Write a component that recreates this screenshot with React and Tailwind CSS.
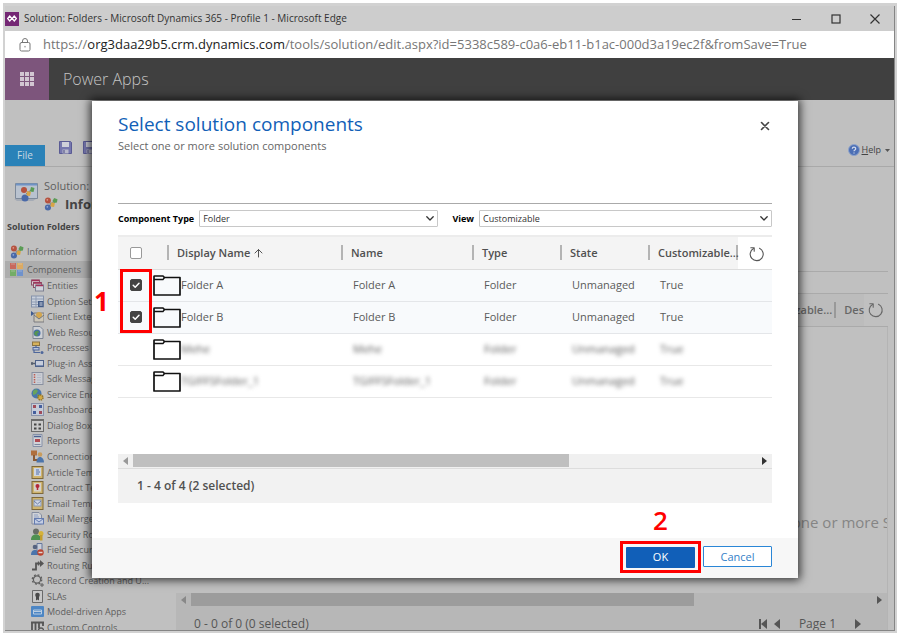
import React from "react";

const ink = { fill: "none", strokeLinecap: "round", strokeLinejoin: "round" };

function Spheres({ className }) {
  return (
    <svg viewBox="0 0 16 16" className={className} aria-hidden="true">
      <path d="M4 4l4 4 5-5M8 8l-4 4" stroke="#8a8f96" strokeWidth="1.5" fill="none" />
      <circle cx="4.5" cy="4" r="3.4" fill="#b5523f" />
      <circle cx="3.8" cy="3.2" r="1" fill="#dd9a8c" />
      <circle cx="4.5" cy="12" r="3.5" fill="#4a69a8" />
      <circle cx="3.8" cy="11.2" r="1" fill="#93a9d6" />
      <path d="M11.6 1l3.8 1.6-.6 3.8-3.8.4-1-2.8z" fill="#5a9c55" />
      <path d="M8.5 6l4 1-1 4.500-4.300-.6z" fill="#d8a545" />
    </svg>
  );
}

function ComponentsIcon() {
  return (
    <svg viewBox="0 0 14 14" className="size-[14px] shrink-0" aria-hidden="true">
      <rect x="0" y="0" width="6" height="6" fill="#c8685c" />
      <rect x="7" y="0" width="6" height="6" fill="#dcaa62" />
      <rect x="0" y="7" width="6" height="6" fill="#74ad66" />
      <rect x="7" y="7" width="6" height="6" fill="#6f92cc" />
      <path d="M1 1h4M8 1h4M1 8h4M8 8h4" stroke="#ddd" strokeOpacity=".4" />
    </svg>
  );
}

const glyphs = {
  entities: (
    <>
      <rect x=".5" y="1" width="8" height="5" fill="#d8cdd3" stroke="#8d4f68" />
      <rect x="2.5" y="3.5" width="8" height="5" fill="#d8cdd3" stroke="#8d4f68" />
      <rect x="4.5" y="6" width="8" height="6" fill="#cfd3dc" stroke="#7c7f90" />
      <path d="M1 1.5h7M3 4h7M5 6.5h7" stroke="#a03058" strokeWidth="1.3" />
    </>
  ),
  options: (
    <>
      <rect x=".5" y="1" width="12" height="11" fill="#c9d0dc" stroke="#8592aa" />
      <path d="M1 4h11M1 7h7M1 9.500h7M5 1v11" stroke="#8f9cb3" />
      <rect x="7" y="6" width="5.500" height="6" fill="#425a86" />
      <path d="M8.500 8h3M8.500 10h3" stroke="#d0d5df" />
    </>
  ),
  client: (
    <>
      <path d="M0 1l3.500 2.500L0 6z" fill="#3f5c92" />
      <path d="M3 3h10v9H3z" fill="#ccc7b9" stroke="#7a7a80" />
      <circle cx="8" cy="5" r="3" fill="#d3a64f" />
      <path d="M3 5l5 4 5-4" stroke="#71747c" fill="none" />
    </>
  ),
  web: (
    <>
      <path d="M2 .5h7l3 3v9H2z" fill="#ced1d6" stroke="#7c8594" />
      <circle cx="6" cy="7" r="3.500" fill="#466fa8" />
      <path d="M4 5.500l3-1 1 2-2 1 1 2-2 .5-2-2z" fill="#569451" />
    </>
  ),
  process: (
    <>
      <rect x="1.500" y="1" width="7" height="3.500" fill="#d6b25c" stroke="#8b7340" />
      <path d="M5 4.500v3M3 9v2.500h6" stroke="#4e679b" fill="none" strokeWidth="1.200" />
      <rect x="2" y="6.500" width="6" height="2.500" fill="#b8c4db" stroke="#4e679b" />
      <circle cx="11" cy="11.500" r="1.500" fill="#4e679b" />
    </>
  ),
  plugin: (
    <>
      <path d="M0 6.500h4M1 5v3" stroke="#57606f" strokeWidth="1.500" />
      <rect x="4.500" y="3.500" width="8" height="6" fill="#c6cddb" stroke="#4d6189" />
      <path d="M5 8.500h7" stroke="#7b8eb4" />
    </>
  ),
  sdk: (
    <>
      <rect x="1" y=".5" width="11" height="12" fill="#cbcdd3" stroke="#8990a0" />
      <path d="M3.500 2v9" stroke="#bb5b50" strokeWidth="1.500" strokeDasharray="1.500 1" />
      <path d="M6 3h4M6 5.500h4M6 8h4M6 10.500h4" stroke="#b3bac9" />
    </>
  ),
  service: (
    <>
      <circle cx="5.500" cy="5.500" r="5" fill="#4876aa" />
      <path d="M2 3l3-2 2 2-2 3-3 1zM6 6l3 1-2 3z" fill="#67a35c" />
      <circle cx="9.500" cy="9.500" r="2.500" fill="#d1aa46" stroke="#907128" strokeDasharray="1.400 .8" strokeWidth="1.500" />
    </>
  ),
  dash: (
    <>
      <rect x=".5" y=".5" width="12" height="12" fill="#c5cbd9" stroke="#8b94ab" />
      <rect x="2" y="2" width="3" height="3" fill="#9f4c5a" />
      <rect x="8" y="2" width="3" height="3" fill="#455f9d" />
      <rect x="2" y="8" width="3" height="3" fill="#455f9d" />
      <rect x="8" y="8" width="3" height="3" fill="#9f4c5a" />
    </>
  ),
  dialog: (
    <>
      <rect x=".5" y=".5" width="12" height="12" fill="#cacaca" stroke="#6c6c6c" />
      <path d="M1 1.500h11" stroke="#6c6c6c" />
      <path d="M3 4.500h2.500v2H3zM7.500 4.500H10v2H7.500zM3 8.500h2.500v2H3zM7.500 8.500H10v2H7.500z" fill="#454545" />
    </>
  ),
  reports: (
    <>
      <path d="M2 .5h9v12H2z" fill="#d1d3d8" stroke="#8590a8" />
      <path d="M3 2.500h7" stroke="#4b6190" strokeWidth="1.500" />
      <path d="M4 5h5v3H4z" fill="#b04b52" />
      <path d="M3.500 10.500h6" stroke="#7c88a0" />
    </>
  ),
  connection: (
    <>
      <path d="M0 .5h6v5H0z" fill="#b06f3c" />
      <path d="M3 5v5h4" stroke="#8b5a34" fill="none" strokeWidth="2" />
      <circle cx="9" cy="4.500" r="2.300" fill="#c99c5c" />
      <path d="M5.500 12.500c0-4 2-5.500 3.500-5.500s4 1.500 4 5.500z" fill="#4c75ab" />
    </>
  ),
  article: (
    <>
      <rect x="1" y=".5" width="11" height="12" fill="#cfb46e" stroke="#7d683a" />
      <rect x="3" y="2" width="7" height="8" fill="#cdd5e4" />
      <path d="M5 4h3M5 6h4M5 8h3" stroke="#5370a8" />
    </>
  ),
  contract: (
    <>
      <rect x="1" y=".5" width="11" height="12" fill="#cfb46e" stroke="#7d683a" />
      <rect x="3" y="2" width="7" height="8.500" fill="#d6d1c9" />
      <circle cx="6.500" cy="5" r="2" fill="#b32839" />
      <path d="M6.500 6v3" stroke="#b32839" strokeWidth="1.500" />
    </>
  ),
  email: (
    <>
      <rect x="1" y=".5" width="11" height="12" fill="#cfb46e" stroke="#7d683a" />
      <rect x="3" y="3" width="7" height="6" fill="#cdd5e4" stroke="#8797b8" />
      <path d="M3 4l3.500 3L10 4" stroke="#6c7fa8" fill="none" />
    </>
  ),
  mail: (
    <>
      <path d="M1 .5h7l2.500 2.500v9H1z" fill="#d0d2d7" stroke="#858da0" />
      <path d="M3 3h4M3 5h5" stroke="#8fa0c5" />
      <rect x="3.500" y="6.500" width="9" height="5.500" fill="#c3cde3" stroke="#637bb0" />
      <path d="M3.500 6.500L8 10l4.500-3.500" stroke="#637bb0" fill="none" />
    </>
  ),
  security: (
    <>
      <circle cx="5" cy="3.500" r="3" fill="#686c66" />
      <path d="M0 12c0-4 2-5.500 5-5.500s5 1.500 5 5.500z" fill="#4f9150" />
      <circle cx="10" cy="5.500" r="2.500" fill="#d4b23b" />
      <path d="M9 7v5.500h2.500V7z" fill="#c39d2c" />
    </>
  ),
  field: (
    <>
      <path d="M6 .5h5v8H6z" fill="#c9ced8" stroke="#65779c" />
      <circle cx="4" cy="4" r="2.300" fill="#55637f" />
      <path d="M0 12c0-4 2-5 4-5s4 1 4 5z" fill="#4a75ac" />
      <circle cx="9.500" cy="9.500" r="3.200" fill="#b9432f" />
      <path d="M7.500 9.500h4" stroke="#e0d5d2" strokeWidth="1.500" />
    </>
  ),
  routing: (
    <>
      <path d="M1 10.500h4v-6h5" stroke="#555" strokeWidth="1.800" fill="none" />
      <path d="M9 1l4 3.500L9 8z" fill="#555" />
      <path d="M7.500 2.500v4" stroke="#555" strokeWidth="1.300" />
    </>
  ),
  record: (
    <>
      <circle cx="6" cy="5.500" r="4.700" stroke="#5e5e5e" strokeWidth="1.400" strokeDasharray="1.900 1.800" fill="none" />
      <circle cx="6" cy="5.500" r="3.600" stroke="#5e5e5e" strokeWidth="1.200" fill="none" />
      <path d="M11 9v4M9 11h4" stroke="#5e5e5e" />
    </>
  ),
  sla: (
    <>
      <path d="M1.500 .5h10v12h-10z" fill="#c8c8c8" stroke="#6a6a6a" />
      <circle cx="6.500" cy="5" r="2.300" fill="#4a4a4a" />
      <path d="M5 6v4.500l1.500-1L8 10.500V6z" fill="#4a4a4a" />
    </>
  ),
  model: (
    <>
      <rect x="0" y="1" width="13" height="11" rx="1" fill="#4d86c4" />
      <path d="M2.500 5h8v4h-8z" fill="none" stroke="#b9cde2" />
      <path d="M3 6.500h7" stroke="#b9cde2" />
    </>
  ),
  custom: (
    <>
      <path d="M0 1.500h13M1 1v8M4.500 1v8M8 1v6M12 1v4" stroke="#565656" strokeWidth="1.800" />
      <circle cx="10" cy="9.500" r="2.500" stroke="#565656" strokeWidth="1.300" fill="none" />
    </>
  ),
};

const tree = [
  ["entities", "Entities"],
  ["options", "Option Sets"],
  ["client", "Client Extensions"],
  ["web", "Web Resources"],
  ["process", "Processes"],
  ["plugin", "Plug-in Assemblies"],
  ["sdk", "Sdk Message Steps"],
  ["service", "Service Endpoints"],
  ["dash", "Dashboards"],
  ["dialog", "Dialog Boxes"],
  ["reports", "Reports"],
  ["connection", "Connection Roles"],
  ["article", "Article Templates"],
  ["contract", "Contract Templates"],
  ["email", "Email Templates"],
  ["mail", "Mail Merge Templates"],
  ["security", "Security Roles"],
  ["field", "Field Security Profiles"],
  ["routing", "Routing Rule Sets"],
  ["record", "Record Creation and U..."],
  ["sla", "SLAs"],
  ["model", "Model-driven Apps"],
  ["custom", "Custom Controls"],
];

const rows = [
  { name: "Folder A", picked: true },
  { name: "Folder B", picked: true },
  { name: "Mehe", hidden: true },
  { name: "TGIFFSFolder_1", hidden: true },
];

function Refresh() {
  return (
    <svg viewBox="0 0 16 16" className="size-4" {...ink} stroke="currentColor" strokeWidth="1.1" aria-hidden="true">
      <path d="M10.500 2.300A6.500 6.500 0 1 1 4.500 2.500" />
      <path d="M1.800 1.800h3.400v3.400" />
    </svg>
  );
}

function Folder() {
  return (
    <svg viewBox="0 0 28 21" className="h-[21px] w-7 shrink-0" fill="none" stroke="#111" strokeWidth="1.700" strokeLinejoin="round" aria-hidden="true">
      <path d="M1 20V1.500Q1 1 1.500 1H10l1.500 1.500H27V20z" />
      <path d="M1 4.500h9l1.500-2" strokeWidth="1.300" />
    </svg>
  );
}

function Arrow({ left }) {
  return (
    <svg viewBox="0 0 5 8" className="h-2 w-[5px]" fill="currentColor" aria-hidden="true">
      {left ? <path d="M5 0v8L0 4z" /> : <path d="M0 0v8l5-4z" />}
    </svg>
  );
}

function PageArrow({ left }) {
  return (
    <svg viewBox="0 0 6 10" className="h-[10px] w-1.5" fill="currentColor" aria-hidden="true">
      {left ? <path d="M6 0v10L0 5z" /> : <path d="M0 0v10l6-5z" />}
    </svg>
  );
}

function ScrollBar({ track, thumb, leftArrow, rightArrow }) {
  return (
    <div className={`flex h-[14px] items-center ${track}`}>
      <div className={`flex w-[15px] justify-center ${leftArrow}`}><Arrow left /></div>
      <div className="h-full flex-1"><div className={`h-[13px] ${thumb}`} /></div>
      <div className={`flex w-4 justify-center ${rightArrow}`}><Arrow /></div>
    </div>
  );
}

function Picker({ id, value }) {
  return (
    <div className="relative min-w-0 flex-1">
      <select id={id} defaultValue={value} className="block h-[17px] w-full appearance-none rounded-[1px] border border-[#c8c8c8] bg-white pl-[3px] text-[9px] leading-[15px] text-[#333]">
        <option>{value}</option>
      </select>
      <svg viewBox="0 0 8 5" className="pointer-events-none absolute top-1.5 right-1 h-[5px] w-2" {...ink} stroke="#333" strokeWidth="1.300" aria-hidden="true">
        <path d="M.8.8L4 4 7.200.8" />
      </svg>
    </div>
  );
}

function Head({ children, className = "" }) {
  return (
    <th className={`p-0 text-left font-semibold ${className}`}>
      <div className="flex h-[15px] items-center border-l-2 border-[#b4b4b4] pl-2 whitespace-nowrap">{children}</div>
    </th>
  );
}

function Tick({ checked, label }) {
  return (
    <span className="relative mx-auto block size-3">
      <input type="checkbox" defaultChecked={checked} aria-label={label} className="peer block size-3 appearance-none rounded-[2px] border border-[#999] bg-white checked:border-[#444] checked:bg-[#444]" />
      <svg viewBox="0 0 12 12" className="pointer-events-none absolute inset-0 hidden size-3 peer-checked:block" {...ink} stroke="#fff" strokeWidth="1.500" aria-hidden="true">
        <path d="M3.200 6.200l2 2 3.800-4" />
      </svg>
    </span>
  );
}

function Dialog() {
  return (
    <section role="dialog" aria-labelledby="dialog-title" className="w-full bg-white shadow-[0_0_9px_2px_rgba(0,0,0,0.75)]">
      <div className="px-[26px] pt-[9px]">
        <div className="flex items-start justify-between">
          <div>
            <h1 id="dialog-title" className="text-[19px] leading-[28px] text-[#1160b7]">Select solution components</h1>
            <p className="text-[11px] leading-4 text-[#666]">Select one or more solution components</p>
          </div>
          <button type="button" aria-label="Close" className="mt-[11px] mr-0.5 text-[#444]">
            <svg viewBox="0 0 10 10" className="size-[10px]" {...ink} stroke="currentColor" strokeWidth="1.600" aria-hidden="true"><path d="M1.500 1.500l7 7M8.500 1.500l-7 7" /></svg>
          </button>
        </div>

        <div className="mt-[49px] flex border-t border-[#aaa] pt-1.5 text-[9px] leading-[17px]">
          <div className="flex w-[49%] gap-[5px]">
            <label htmlFor="type" className="font-bold whitespace-nowrap text-black">Component Type</label>
            <Picker id="type" value="Folder" />
          </div>
          <div className="flex flex-1 gap-[5px] pl-[14px]">
            <label htmlFor="view" className="font-bold text-black">View</label>
            <Picker id="view" value="Customizable" />
          </div>
        </div>

        <div className="relative mt-2 border-t-2 border-[#ececec]">
          <table className="w-full table-fixed border-collapse text-[11px] leading-4 text-[#5a5a5a]">
            <colgroup>
              <col className="w-[35px]" />
              <col />
              <col className="w-[131px]" />
              <col className="w-[88px]" />
              <col className="w-[88px]" />
              <col className="w-[90px]" />
              <col className="w-[34px]" />
            </colgroup>
            <thead>
              <tr className="h-8 border-b border-[#ddd] bg-[#f4f4f4] text-[#505050]">
                <th className="p-0"><Tick label="Select all" /></th>
                <Head className="pl-[14px]">
                  Display Name
                  <svg viewBox="0 0 9 10" className="ml-1 h-[10px] w-[9px]" {...ink} stroke="#555" aria-hidden="true"><path d="M4.500 9V1.500M1 5l3.500-3.500L8 5" /></svg>
                </Head>
                <Head>Name</Head>
                <Head>Type</Head>
                <Head>State</Head>
                <th className="p-0 text-left font-semibold">
                  <div className="flex h-[15px] items-center border-x-2 border-[#b4b4b4] pl-2 whitespace-nowrap">Customizable...</div>
                </th>
                <th className="bg-white p-0 text-[#555]">
                  <button type="button" aria-label="Refresh" className="block w-full pt-0.5 pl-[11px]"><Refresh /></button>
                </th>
              </tr>
            </thead>
            <tbody>
              {rows.map((r) => {
                const text = r.hidden ? "inline-block blur-[2px]" : "";
                return (
                  <tr key={r.name} className={r.picked ? "h-8 border-b border-[#e4e6e9] bg-[#f8fafc]" : "h-8 border-b border-[#e8e8e8]"}>
                    <td className="p-0">{r.picked && <Tick checked label={r.name} />}</td>
                    <td className="p-0">
                      <div className="flex items-center"><Folder /><span className={text}>{r.name}</span></div>
                    </td>
                    <td className="p-0 pl-3"><span className={text}>{r.name}</span></td>
                    <td className="p-0 pl-3"><span className={text}>Folder</span></td>
                    <td className="p-0 pl-3"><span className={text}>Unmanaged</span></td>
                    <td className="p-0 pl-3"><span className={text}>True</span></td>
                    <td className="p-0" />
                  </tr>
                );
              })}
            </tbody>
          </table>
          <div className="absolute top-8 left-0.5 h-16 w-8 border-[3px] border-[#f00]" />
          <div className="absolute top-[50px] -left-[24px] text-[26px] leading-7 font-bold text-[#f00]">1</div>
          <div className="h-[56px]" />
          <ScrollBar track="bg-[#f0f0f0]" thumb="w-[70%] bg-[#bfbfbf]" leftArrow="text-[#999]" rightArrow="text-[#333]" />
        </div>
        <div className="border-t border-[#ddd] bg-[#f2f2f2] px-[19px] py-2 text-[12px] leading-[18px] font-semibold text-[#505050]">
          1 - 4 of 4 (2 selected)
        </div>
      </div>

      <footer className="relative mt-[35px] flex justify-end gap-0.5 bg-[#f7f7f7] pt-[3px] pr-[26px] pb-[5px]">
        <div className="relative border-[3px] border-[#f00] p-[3px] pb-0.5">
          <span className="absolute -top-[38px] left-0 w-full text-center text-[26px] leading-7 font-semibold text-[#f00]">2</span>
          <button type="button" className="block h-[21px] w-[69px] rounded-[1px] bg-[#115fb8] text-[11px] text-white">OK</button>
        </div>
        <button type="button" className="mt-[5px] h-[21px] w-[69px] rounded-[1px] border border-[#2a86d6] bg-white text-[11px] leading-[19px] text-[#3380c8]">Cancel</button>
      </footer>
    </section>
  );
}

function Workspace() {
  return (
    <div className="absolute inset-0 flex flex-col overflow-hidden">
      <div className="flex h-[67px] shrink-0 items-end border-b border-[#a9a9a9]">
        <button type="button" className="h-[21px] w-10 bg-[#2a82b8] text-[10px] text-[#c8d8e2]">File</button>
        <div className="flex h-[33px] gap-[11px] pl-[14px]">
          {[0, 1].map((n) => (
            <svg key={n} viewBox="0 0 13 13" className="mt-2 size-[13px]" aria-hidden="true">
              <path d="M.5.500h11l1 1v11H.500z" fill="#7677ae" stroke="#5a5b94" />
              <rect x="3" y="1" width="7" height="5" fill="#cfd0da" />
              <rect x="3.500" y="8.500" width="6" height="4" fill="#b9bacb" />
              <path d="M5 9v3" stroke="#4b4c83" />
            </svg>
          ))}
        </div>
        <a href="#help" className="mr-1 mb-2 ml-auto flex items-center gap-0.5 text-[9px] leading-4 text-[#444]">
          <svg viewBox="0 0 12 12" className="size-3" aria-hidden="true">
            <circle cx="6" cy="6" r="5.500" fill="#4c6fb5" stroke="#8ea3cb" />
            <path d="M4.300 4.700c0-2 3.400-2 3.400 0C7.700 6 6 6 6 7.300M6 8.500v1" stroke="#d5dcec" strokeWidth="1.200" fill="none" />
          </svg>
          <span><span className="underline">H</span>elp</span>
          <svg viewBox="0 0 5 3" className="ml-0.5 h-[3px] w-[5px]" fill="#555" aria-hidden="true"><path d="M0 0h5L2.500 3z" /></svg>
        </a>
      </div>
      <div className="flex min-h-0 flex-1">
        <aside className="w-[171px] shrink-0 text-[#5e5e5e]">
          <div className="flex h-[50px] pt-[11px] pl-2">
            <svg viewBox="0 0 28 26" className="h-[26px] w-7 shrink-0" aria-hidden="true">
              <path d="M2.500 5.500h22v15H2.500z" fill="#b9c2cf" stroke="#7d899a" />
              <path d="M3 6.500h21" stroke="#6f93c5" strokeWidth="2" />
              <path d="M1 21h22l-3 2H4z" fill="#a5abb5" />
              <circle cx="11" cy="12" r="3" fill="#b5523f" />
              <circle cx="12" cy="20" r="3.500" fill="#4a69a8" />
              <path d="M13 16l5-4" stroke="#777" />
              <path d="M18 9l3.500 1-1 4-3.500-.5z" fill="#5a9c55" />
              <path d="M14 13l4 1-1 4-3.500-.5z" fill="#d8a545" />
            </svg>
            <div className="pl-[3px] whitespace-nowrap">
              <div className="text-[11px] leading-4">Solution: Folders</div>
              <div className="flex items-center gap-[7px] text-[13px] leading-5 font-bold text-[#454545]">
                <Spheres className="size-[14px]" />Information
              </div>
            </div>
          </div>
          <div className="pl-0.5 text-[9px] leading-5 font-bold whitespace-nowrap text-[#454545]">Solution Folders</div>
          <div className="mt-1.5 flex h-[18px] items-center gap-[3px] pl-[5px] text-[9px]"><Spheres className="size-[14px]" />Information</div>
          <div className="flex h-[17px] items-center gap-[3px] bg-[#adadad] pl-[5px] text-[9px]"><ComponentsIcon />Components</div>
          <ul className="grid h-[357px] auto-rows-fr text-[9px] leading-[15px]">
            {tree.map(([icon, label]) => (
              <li key={icon} className="flex min-h-0 items-center gap-[3px] pl-[26px] whitespace-nowrap">
                <svg viewBox="0 0 13 13" className="size-[13px] shrink-0" aria-hidden="true">{glyphs[icon]}</svg>
                {label}
              </li>
            ))}
          </ul>
        </aside>
        <main className="mr-1.5 flex min-w-0 flex-1 flex-col pt-[104px] text-[#666]">
          <div className="border-t border-[#aaa] pt-[21px]" />
          <div className="flex h-[34px] items-center justify-end border-y border-[#aaa] bg-[#bcbcbc] text-[11px] font-semibold">
            <span>Customizable...</span>
            <span className="ml-0.5 border-l-2 border-[#999] pl-2">Des</span>
            <button type="button" aria-label="Refresh components" className="flex h-full w-6 items-center justify-center bg-[#c0c0c0]"><Refresh /></button>
          </div>
          <div className="flex min-h-0 flex-1 flex-col justify-end overflow-hidden border-r border-[#b4b4b4]">
            <p className="-mr-1 mb-[59px] text-right text-[15px] leading-6 whitespace-nowrap text-[#858585]">one or more S</p>
            <ScrollBar track="bg-[#b7b7b7]" thumb="w-[74%] bg-[#9c9c9c]" leftArrow="text-[#888]" rightArrow="text-[#555]" />
            <div className="flex h-[23px] items-end bg-[#b7b7b7] pl-[18px] text-[12px] leading-[12px] text-[#555]">
              <span>0 - 0 of 0 (0 selected)</span>
              <div className="ml-auto flex items-center gap-[7px] pr-[26px]">
                <span className="flex items-center"><span className="h-[10px] w-0.5 bg-current" /><PageArrow left /></span>
                <PageArrow left />
                <span className="px-3">Page 1</span>
                <PageArrow />
              </div>
            </div>
          </div>
        </main>
      </div>
    </div>
  );
}

export default function App() {
  return (
    <div className="h-screen min-h-[637px] bg-white px-[3px] pt-[3px] pb-1 font-['Open_Sans','Noto_Sans',sans-serif]">
      <div className="h-full bg-[#d2d2d2] pt-[3px] pr-0.5 pb-0.5 pl-0.5">
        <div className="flex h-full flex-col border-r border-b border-[#858585]">
          <header className="flex h-[25px] shrink-0 items-center bg-[#cdcdcd] text-[10px] text-[#333]">
            <div className="mr-[5px] flex h-[14px] w-[14px] items-center justify-center bg-[#742774]">
              <svg viewBox="0 0 12 8" className="h-[7px] w-[10px]" fill="none" stroke="#fff" strokeWidth="1.500" aria-hidden="true"><path d="M3.300 1L.8 4l2.500 3 2.500-3zM8.700 1L6.200 4l2.500 3 2.500-3z" /></svg>
            </div>
            Solution: Folders - Microsoft Dynamics 365 - Profile 1 - Microsoft Edge
            <div className="ml-auto flex gap-[29px] pr-[14px]">
              <button type="button" aria-label="Minimize"><svg viewBox="0 0 10 10" className="size-[10px]" stroke="#333"><path d="M0 5.500h9" /></svg></button>
              <button type="button" aria-label="Maximize"><svg viewBox="0 0 10 10" className="size-[10px]" fill="none" stroke="#333" strokeWidth="1.200"><rect x="1" y="1" width="8" height="8" /></svg></button>
              <button type="button" aria-label="Close window"><svg viewBox="0 0 10 10" className="size-[10px]" stroke="#333" strokeWidth="1.200"><path d="M.5.500l9 9M9.500.500l-9 9" /></svg></button>
            </div>
          </header>
          <div className="flex h-[27px] shrink-0 items-center bg-white pl-[14px] text-[13px] whitespace-nowrap text-[#767676]">
            <svg viewBox="0 0 12 14" className="mr-3 h-[14px] w-3" {...ink} stroke="#777" aria-hidden="true">
              <rect x="1" y="4.500" width="10" height="8.500" rx="1.500" /><path d="M3.500 4.500V3a2.500 2.500 0 0 1 5 0v1.500M6 8.300v.7" />
            </svg>
            <span>https://<span className="text-[#222]">org3daa29b5.crm.dynamics.com</span>/tools/solution/edit.aspx?id=5338c589-c0a6-eb11-b1ac-000d3a19ec2f&amp;fromSave=True</span>
          </div>
          <div className="flex h-[42px] shrink-0 items-center bg-[#404040] text-[16px] font-light text-[#c4c4c4]">
            <button type="button" aria-label="App launcher" className="mr-[14px] flex h-full w-11 items-center justify-center bg-[#7d557c]">
              <svg viewBox="0 0 14 14" className="size-[14px]" fill="#d2c6d2" aria-hidden="true">
                <path d="M0 0h4v4H0zM5 0h4v4H5zM10 0h4v4h-4zM0 5h4v4H0zM5 5h4v4H5zM10 5h4v4h-4zM0 10h4v4H0zM5 10h4v4H5zM10 10h4v4h-4z" />
              </svg>
            </button>
            Power Apps
          </div>
          <div className="relative min-h-0 flex-1 bg-[#c0c0c0]">
            <Workspace />
            <div className="absolute inset-x-0 top-px pr-[96px] pl-[87px]">
              <Dialog />
            </div>
          </div>
        </div>
      </div>
    </div>
  );
}
